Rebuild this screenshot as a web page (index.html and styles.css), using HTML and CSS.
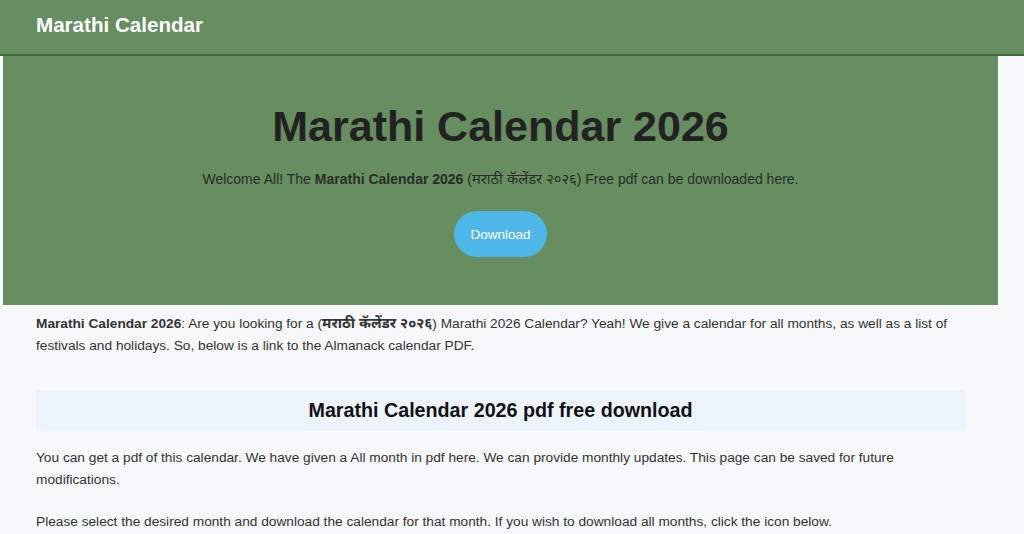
FILE: index.html
```html
<!DOCTYPE html>
<html lang="en">
<head>
<meta charset="utf-8">
<title>Marathi Calendar 2026</title>
<link rel="stylesheet" href="styles.css">
</head>
<body>
<header class="site-header">
  <div class="brand">Marathi Calendar</div>
</header>
<section class="hero">
  <h1 class="hero-title">Marathi Calendar 2026</h1>
  <p class="hero-sub">Welcome All! The <strong>Marathi Calendar 2026</strong> (<span class="deva">मराठी कॅलेंडर २०२६</span>) Free pdf can be downloaded here.</p>
  <a class="btn" href="#">Download</a>
</section>
<main class="content">
  <p class="para"><strong>Marathi Calendar 2026</strong>: Are you looking for a (<strong class="deva">मराठी कॅलेंडर २०२६</strong>) Marathi 2026 Calendar? Yeah! We give a calendar for all months, as well as a list of festivals and holidays. So, below is a link to the Almanack calendar PDF.</p>
  <h2 class="section-title">Marathi Calendar 2026 pdf free download</h2>
  <p class="para">You can get a pdf of this calendar. We have given a All month in pdf here. We can provide monthly updates. This page can be saved for future modifications.</p>
  <p class="para">Please select the desired month and download the calendar for that month. If you wish to download all months, click the icon below.</p>
</main>
</body>
</html>
```
FILE: styles.css
```css
html, body {
  margin: 0;
  padding: 0;
}
body {
  background: #f7f8fa;
  color: #333333;
  font-family: "Liberation Sans", "Noto Sans", sans-serif;
}
.deva {
  font-size: 1.05em;
  line-height: 1;
}
.site-header {
  height: 56px;
  background: #668e60;
  border-bottom: 2px solid #3f6a37;
  box-sizing: border-box;
  display: flex;
  align-items: center;
  padding: 0 36px;
}
.brand {
  color: #ffffff;
  font-weight: 700;
  font-size: 20.6px;
  line-height: 24px;
  margin-top: -4px;
}
.hero {
  margin-left: 3px;
  width: 995px;
  height: 249px;
  background: #668e60;
  display: flex;
  flex-direction: column;
  align-items: center;
  padding-top: 44px;
  box-sizing: border-box;
}
.hero-title {
  margin: 0;
  font-size: 43px;
  line-height: 52px;
  font-weight: 700;
  color: #222222;
}
.hero-sub {
  margin: 17px 0 0;
  font-size: 14px;
  line-height: 20px;
  color: #2b2b2b;
}
.btn {
  margin-top: 22px;
  width: 93px;
  height: 46px;
  border-radius: 23px;
  background: #4fb7e8;
  color: #ffffff;
  font-size: 13.5px;
  text-decoration: none;
  display: flex;
  align-items: center;
  justify-content: center;
}
.content {
  padding: 8px 0 0 36px;
  width: 929px;
}
.para {
  margin: 0 0 20px;
  font-size: 13.7px;
  line-height: 22px;
  color: #333333;
}
.section-title {
  margin: 33px 0 16px;
  background: #eef4fe;
  height: 41px;
  display: flex;
  align-items: center;
  justify-content: center;
  font-size: 19.7px;
  font-weight: 700;
  color: #111111;
}
```
